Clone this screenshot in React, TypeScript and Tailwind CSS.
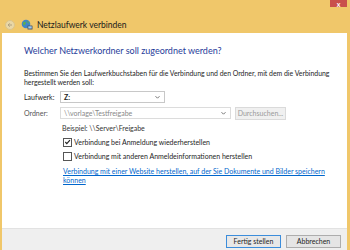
import React from "react";

const font = { fontFamily: 'Lato, "Noto Sans", sans-serif' };

function Chevron() {
  return (
    <svg width="7" height="5" viewBox="0 0 7 5">
      <path d="M1.5 1.2 L3.5 3.2 L5.5 1.2" fill="none" stroke="#777" strokeWidth="1" />
    </svg>
  );
}

function Check() {
  return (
    <svg width="8" height="8" viewBox="0 0 8 8">
      <path d="M1.5 4 L3.2 5.8 L6.8 1.8" fill="none" stroke="#222" strokeWidth="1.3" />
    </svg>
  );
}

export default function App() {
  return (
    <div
      className="w-[350px] h-[250px] bg-[#f0c76a] flex flex-col overflow-hidden relative text-[#1e1e1e]"
      style={font}
    >
      {/* close button */}
      <div className="absolute left-[330px] top-0 w-[17px] h-[7px] bg-[#c9504c] flex items-end justify-center">
        <span className="text-white text-[7px] leading-[6px] font-bold">x</span>
      </div>

      {/* title bar */}
      <div className="h-[33px] flex items-end pb-[2px] pl-[5px] gap-[4px]">
        <div className="mb-[1px] w-[10px] h-[10px] rounded-full bg-[#e9d7a6] border border-[#dcc48a] flex items-center justify-center">
          <svg width="6" height="6" viewBox="0 0 6 6">
            <path d="M5 3 H1.2 M2.8 1.3 L1.1 3 L2.8 4.7" fill="none" stroke="#a89a7a" strokeWidth="0.9" />
          </svg>
        </div>
        <svg width="12" height="11" viewBox="0 0 12 11" className="ml-[2px] mb-[1px]">
          <circle cx="5" cy="5" r="4.3" fill="#3f86c8" />
          <path d="M2 3.5 Q4 2 5 4 Q4 6 2.5 6.5Z M5.5 1.5 Q8 2.5 8.5 5 Q7 4 6 3Z" fill="#5fb04a" />
          <rect x="6.5" y="6.5" width="5" height="4" rx="0.5" fill="#4a5a6a" />
          <rect x="7.3" y="7.3" width="3.4" height="2.2" fill="#9ec8ee" />
        </svg>
        <span className="text-[8.5px] leading-[12px] text-[#1a1a1a]">Netzlaufwerk verbinden</span>
      </div>

      {/* body */}
      <div className="flex-1 ml-[2px] mr-[3px] flex flex-col">
        <div className="bg-white h-[195px] pl-[22px] pr-[4px] pt-[11px] flex flex-col">
          <div className="text-[9px] leading-[14px] text-[#1f3d9a]">
            Welcher Netzwerkordner soll zugeordnet werden?
          </div>
          <div className="mt-[11px] text-[6.9px] leading-[8.5px] w-[318px]">
            Bestimmen Sie den Laufwerkbuchstaben für die Verbindung und den Ordner, mit dem die Verbindung
            hergestellt werden soll:
          </div>

          <div className="mt-[5px] flex items-center h-[12px] text-[7px]">
            <span className="w-[36px]">Laufwerk:</span>
            <div className="w-[105px] h-[12px] border border-[#c8c8c8] flex items-center justify-between pl-[3px] pr-[3px]">
              <span className="font-bold">Z:</span>
              <Chevron />
            </div>
          </div>

          <div className="mt-[4px] flex items-center h-[12px] text-[7px]">
            <span className="w-[36px] text-[#555]">Ordner:</span>
            <div className="w-[171px] h-[12px] border border-[#dcdcdc] flex items-center justify-between pl-[3px] pr-[3px]">
              <span className="text-[#888]">\\vorlage\Testfreigabe</span>
              <Chevron />
            </div>
            <div className="ml-[4px] w-[51px] h-[13px] bg-[#f0f0f0] border border-[#dadada] flex items-center justify-center text-[#9a9a9a]">
              Durchsuchen...
            </div>
          </div>

          <div className="mt-[4px] ml-[38px] text-[7px] leading-[10px] text-[#333]">
            Beispiel: \\Server\Freigabe
          </div>

          <div className="mt-[4px] ml-[39px] flex items-center gap-[2px] h-[10px] text-[7px]">
            <div className="w-[9px] h-[9px] border border-[#555] bg-white flex items-center justify-center">
              <Check />
            </div>
            <span>Verbindung bei Anmeldung wiederherstellen</span>
          </div>

          <div className="mt-[4px] ml-[39px] flex items-center gap-[2px] h-[10px] text-[7px]">
            <div className="w-[9px] h-[9px] border border-[#555] bg-white" />
            <span>Verbindung mit anderen Anmeldeinformationen herstellen</span>
          </div>

          <div className="mt-[6px] ml-[39px] text-[7px] leading-[9px] text-[#0066cc] underline w-[275px]">
            Verbindung mit einer Website herstellen, auf der Sie Dokumente und Bilder speichern
            können
          </div>
        </div>

        <div className="flex-1 bg-[#efefef] border-t border-[#e2e2e2] flex justify-end items-start pt-[6px] pr-[6px] gap-[5px]">
          <div className="w-[55px] h-[13px] bg-[#e8e8e8] border border-[#3c8ddb] flex items-center justify-center text-[7px]">
            Fertig stellen
          </div>
          <div className="w-[55px] h-[13px] bg-[#e5e5e5] border border-[#adadad] flex items-center justify-center text-[7px]">
            Abbrechen
          </div>
        </div>
      </div>
    </div>
  );
}
